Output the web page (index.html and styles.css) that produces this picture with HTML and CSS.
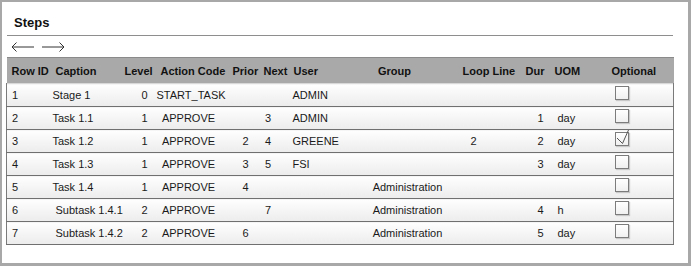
FILE: index.html
```html
<!DOCTYPE html>
<html lang="en">
<head>
    <meta charset="UTF-8">
    <title>Steps</title>
    <link rel="stylesheet" href="styles.css">
</head>
<body>
    <div class="panel">
        <h2 class="panel-title">Steps</h2>
        <div class="nav-arrows">
            <svg class="arrow" width="24" height="10" viewBox="0 0 24 10"><path d="M1 5H23M5.5 0.5L1 5L5.5 9.5" fill="none" stroke="#333" stroke-width="1"/></svg>
            <svg class="arrow" width="24" height="10" viewBox="0 0 24 10"><path d="M1 5H23M18.5 0.5L23 5L18.5 9.5" fill="none" stroke="#333" stroke-width="1"/></svg>
        </div>

        <table class="steps">
            <colgroup>
                <col style="width:46px"><col style="width:68px"><col style="width:36px"><col style="width:74px">
                <col style="width:30px"><col style="width:29px"><col style="width:56px"><col style="width:110px">
                <col style="width:63px"><col style="width:32px"><col style="width:50px"><col style="width:73px">
            </colgroup>
            <thead>
                <tr>
                    <th>Row ID</th><th>Caption</th><th>Level</th><th>Action Code</th><th>Prior</th><th>Next</th>
                    <th>User</th><th>Group</th><th>Loop Line</th><th>Dur</th><th>UOM</th><th>Optional</th>
                </tr>
            </thead>
            <tbody>
                <tr>
                    <td>1</td><td>Stage 1</td><td>0</td><td>START_TASK</td><td></td><td></td>
                    <td>ADMIN</td><td></td><td></td><td></td><td></td><td><span class="check"></span></td>
                </tr>
                <tr>
                    <td>2</td><td>Task 1.1</td><td>1</td><td>APPROVE</td><td></td><td>3</td>
                    <td>ADMIN</td><td></td><td></td><td>1</td><td>day</td><td><span class="check"></span></td>
                </tr>
                <tr>
                    <td>3</td><td>Task 1.2</td><td>1</td><td>APPROVE</td><td>2</td><td>4</td>
                    <td>GREENE</td><td></td><td>2</td><td>2</td><td>day</td>
                    <td><span class="check checked"><svg width="14" height="16" viewBox="0 0 14 16"><path d="M1 9L6.5 14.5L12.5 1" fill="none" stroke="#555" stroke-width="1"/></svg></span></td>
                </tr>
                <tr>
                    <td>4</td><td>Task 1.3</td><td>1</td><td>APPROVE</td><td>3</td><td>5</td>
                    <td>FSI</td><td></td><td></td><td>3</td><td>day</td><td><span class="check"></span></td>
                </tr>
                <tr>
                    <td>5</td><td>Task 1.4</td><td>1</td><td>APPROVE</td><td>4</td><td></td>
                    <td></td><td>Administration</td><td></td><td></td><td></td><td><span class="check"></span></td>
                </tr>
                <tr class="sub">
                    <td>6</td><td>Subtask 1.4.1</td><td>2</td><td>APPROVE</td><td></td><td>7</td>
                    <td></td><td>Administration</td><td></td><td>4</td><td>h</td><td><span class="check"></span></td>
                </tr>
                <tr class="sub">
                    <td>7</td><td>Subtask 1.4.2</td><td>2</td><td>APPROVE</td><td>6</td><td></td>
                    <td></td><td>Administration</td><td></td><td>5</td><td>day</td><td><span class="check"></span></td>
                </tr>
            </tbody>
        </table>
    </div>
</body>
</html>
```

FILE: styles.css
```css
body {
    margin: 0;
    padding: 0;
    font-family: "Liberation Sans", Arial, sans-serif;
    background: #fff;
}
.panel {
    width: 691px;
    height: 266px;
    box-sizing: border-box;
    border: 2px solid #a8a8a8;
    border-right-width: 3px;
    border-bottom-width: 3px;
    padding: 0 15px 0 4px;
}
.panel-title {
    margin: 0 0 0 1px;
    padding: 13px 0 4px 7px;
    font-size: 13px;
    line-height: 16px;
    font-weight: bold;
    color: #111;
    border-bottom: 1px solid #8e8e8e;
}
.nav-arrows {
    height: 21px;
    display: flex;
    align-items: center;
    gap: 6px;
    padding-left: 5px;
}
.arrow {
    display: block;
}
.steps {
    width: 667px;
    table-layout: fixed;
    border-collapse: collapse;
    font-size: 11px;
    color: #1a1a1a;
}
.steps th {
    height: 25px;
    padding: 0;
    background: #a9a9a9;
    border-top: 1px solid #8a8a8a;
    font-weight: bold;
    text-align: left;
    white-space: nowrap;
    color: #111;
}
.steps td {
    height: 22px;
    padding: 0;
    white-space: nowrap;
    background: linear-gradient(#fefefe, #ececec);
    border-bottom: 1px solid #707070;
}
.steps tbody tr:first-child td {
    border-top: 1px solid #d8d8d8;
}
.steps td:first-child {
    border-left: 1px solid #7a7a7a;
}
.steps td:last-child {
    border-right: 1px solid #7a7a7a;
}

/* column placement */
.steps th:nth-child(1), .steps td:nth-child(1) { padding-left: 5px; }
.steps th:nth-child(2) { padding-left: 3px; }
.steps td:nth-child(2) { padding-left: 0; }
.steps tr.sub td:nth-child(2) { padding-left: 3px; }
.steps th:nth-child(3) { padding-left: 4px; }
.steps td:nth-child(3) { text-align: right; padding-right: 9px; }
.steps th:nth-child(4) { padding-left: 4px; }
.steps td:nth-child(4) { text-align: center; padding-right: 10px; }
.steps th:nth-child(5) { padding-left: 2px; }
.steps td:nth-child(5) { text-align: center; }
.steps th:nth-child(6) { padding-left: 3px; }
.steps td:nth-child(6) { text-align: center; padding-right: 14px; }
.steps th:nth-child(7) { padding-left: 4px; }
.steps td:nth-child(7) { padding-left: 3px; }
.steps th:nth-child(8) { text-align: center; padding-right: 12px; }
.steps td:nth-child(8) { text-align: center; padding-left: 14px; }
.steps th:nth-child(9) { padding-left: 7px; }
.steps td:nth-child(9) { padding-left: 15px; }
.steps th:nth-child(10) { padding-left: 7px; }
.steps td:nth-child(10) { text-align: right; padding-right: 7px; }
.steps th:nth-child(11) { padding-left: 4px; }
.steps td:nth-child(11) { padding-left: 7px; }
.steps th:nth-child(12) { padding-left: 11px; }
.steps td:nth-child(12) { padding-left: 14px; vertical-align: top; }

.check {
    display: block;
    position: relative;
    width: 12px;
    height: 12px;
    margin-top: 2px;
    border: 1px solid #7c7c7c;
    background: linear-gradient(#ffffff, #f0f0f0);
    box-shadow: 1px 1px 1px #c8c8c8;
}
.check.checked svg {
    position: absolute;
    left: 0;
    top: -4px;
}
```
